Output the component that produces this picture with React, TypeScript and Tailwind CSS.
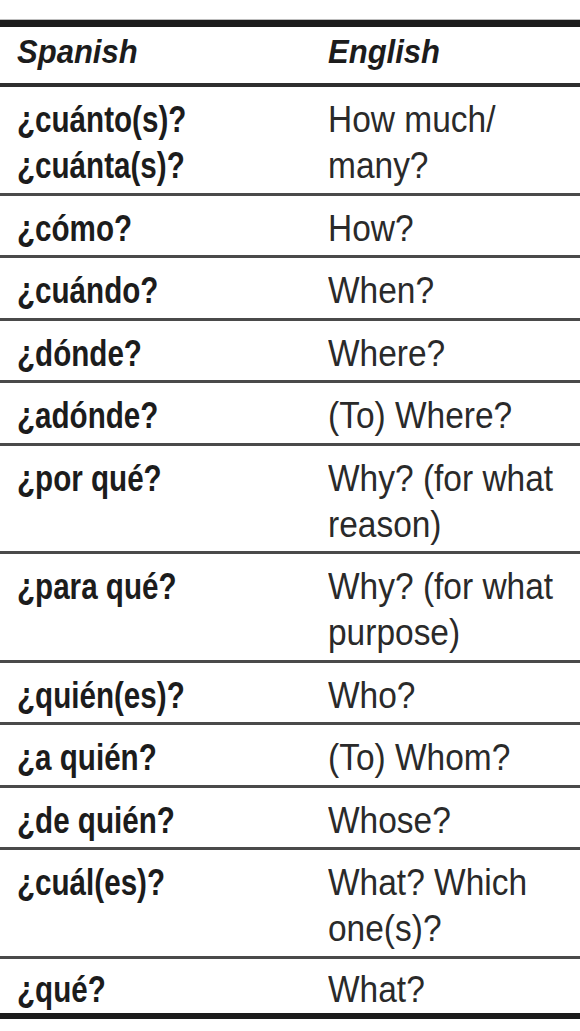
const rows: { es: string[]; en: string[] }[] = [
  { es: ["¿cuánto(s)?", "¿cuánta(s)?"], en: ["How much/", "many?"] },
  { es: ["¿cómo?"], en: ["How?"] },
  { es: ["¿cuándo?"], en: ["When?"] },
  { es: ["¿dónde?"], en: ["Where?"] },
  { es: ["¿adónde?"], en: ["(To) Where?"] },
  { es: ["¿por qué?"], en: ["Why? (for what", "reason)"] },
  { es: ["¿para qué?"], en: ["Why? (for what", "purpose)"] },
  { es: ["¿quién(es)?"], en: ["Who?"] },
  { es: ["¿a quién?"], en: ["(To) Whom?"] },
  { es: ["¿de quién?"], en: ["Whose?"] },
  { es: ["¿cuál(es)?"], en: ["What? Which", "one(s)?"] },
  { es: ["¿qué?"], en: ["What?"] },
];

function Row({ es, en, last }: { es: string[]; en: string[]; last: boolean }) {
  return (
    <div
      className={
        last
          ? "grid grid-cols-[328px_1fr] pt-[8px] pb-0 border-b-[6px] border-[#1c1c1c]"
          : "grid grid-cols-[328px_1fr] pt-[10px] pb-[3.5px] border-b-[3px] border-[#4a4a4a]"
      }
    >
      {/* condensed faces aren't installed, so squeeze the glyphs */}
      <div className="pl-[17px] text-[37px] leading-[46px] font-bold text-[#1c1c1c]">
        {es.map((line) => (
          <div key={line} className="whitespace-nowrap origin-left scale-x-[0.8]">
            {line}
          </div>
        ))}
      </div>
      <div className="text-[36px] leading-[46px] text-[#2a2a2a]">
        {en.map((line) => (
          <div key={line} className="whitespace-nowrap origin-left scale-x-[0.93]">
            {line}
          </div>
        ))}
      </div>
    </div>
  );
}

export default function App() {
  return (
    <div
      className="w-[580px] h-[1031px] bg-white pt-[19px] overflow-hidden"
      style={{ fontFamily: '"Liberation Sans", Arial, sans-serif' }}
    >
      <div className="border-t border-[#bdbdbd]">
        <div className="h-[7px] bg-[#1c1c1c]" />
        <div className="grid grid-cols-[328px_1fr] pt-[5px] pb-[11px] border-b-4 border-[#2e2e2e] text-[33px] leading-[40px] font-bold italic text-[#1c1c1c]">
          <div className="pl-[17px]">
            <div className="origin-left scale-x-[0.94]">Spanish</div>
          </div>
          <div className="origin-left scale-x-[0.94]">English</div>
        </div>
        {rows.map((r, i) => (
          <Row key={i} es={r.es} en={r.en} last={i === rows.length - 1} />
        ))}
      </div>
    </div>
  );
}
